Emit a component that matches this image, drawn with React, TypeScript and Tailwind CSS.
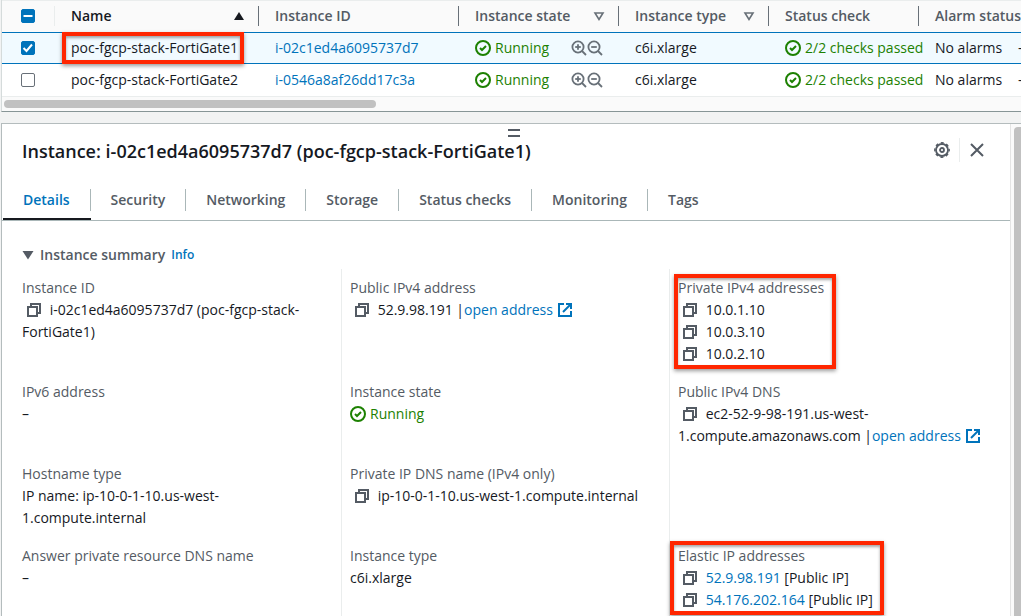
import { useEffect, useRef, useState } from "react";
import type { ReactNode } from "react";

const instances = [
  { name: "poc-fgcp-stack-FortiGate1", id: "i-02c1ed4a6095737d7", flagged: true },
  { name: "poc-fgcp-stack-FortiGate2", id: "i-0546a8af26dd17c3a", flagged: false },
];

const tabs = ["Details", "Security", "Networking", "Storage", "Status checks", "Monitoring", "Tags"];

function CopyIcon() {
  return (
    <svg viewBox="0 0 16 16" className="h-4 w-4" fill="none" stroke="#545b64" strokeWidth="2">
      <path d="M2 5h9v9H2z" />
      <path d="M5 5V2h9v9h-3" />
    </svg>
  );
}

function CopyButton({ label }: { label: string }) {
  return (
    <button type="button" aria-label={label} className="mr-1 ml-1 inline-flex h-4 w-4 align-[-3px]">
      <CopyIcon />
    </button>
  );
}

function ExternalIcon() {
  return (
    <svg viewBox="0 0 16 16" className="ml-1 inline h-4 w-4 align-[-3px]" fill="none" stroke="#0073bb" strokeWidth="2">
      <path d="M7 2H2v12h12V9" />
      <path d="M9 2h5v5" />
      <path d="M6 10l8-8" />
    </svg>
  );
}

function StatusOk({ children }: { children: ReactNode }) {
  return (
    <span className="inline-flex items-center gap-1 whitespace-nowrap text-[#1d8102]">
      <svg viewBox="0 0 16 16" className="h-4 w-4 shrink-0" fill="none" stroke="currentColor" strokeWidth="2">
        <circle cx="8" cy="8" r="7" />
        <path d="M5 8l2 2 4-4" />
      </svg>
      {children}
    </span>
  );
}

function Magnifier({ plus, label }: { plus?: boolean; label: string }) {
  return (
    <button type="button" aria-label={label} className="h-4 w-4">
      <svg viewBox="0 0 16 16" className="h-4 w-4" fill="none" stroke="#687078" strokeWidth="1.8">
        <circle cx="7" cy="7" r="5.6" />
        <path d="M11 11l4 4" />
        <path d="M4.2 7h5.6" />
        {plus && <path d="M7 4.2v5.6" />}
      </svg>
    </button>
  );
}

function Tick({ checked, mixed, label, onChange }: { checked: boolean; mixed?: boolean; label: string; onChange: () => void }) {
  const ref = useRef<HTMLInputElement>(null);
  useEffect(() => {
    if (ref.current) ref.current.indeterminate = !!mixed;
  }, [mixed]);
  const filled = checked || mixed;
  return (
    <span className="relative block h-3.5 w-3.5">
      <input
        ref={ref}
        type="checkbox"
        aria-label={label}
        checked={checked}
        onChange={onChange}
        className={`block h-3.5 w-3.5 appearance-none rounded-xs border ${filled ? "border-[#0073bb] bg-[#0073bb]" : "border-[#687078] bg-white"}`}
      />
      {filled && (
        <svg viewBox="0 0 14 14" className="pointer-events-none absolute inset-0 h-3.5 w-3.5" fill="none" stroke="#fff" strokeWidth="2">
          {mixed ? <path d="M2.5 7h9" /> : <path d="M2.5 7l3 3 5.5-6.5" />}
        </svg>
      )}
    </span>
  );
}

function Highlight({ className }: { className: string }) {
  return (
    <span
      aria-hidden="true"
      className={`pointer-events-none absolute border-[#ff2600] shadow-[0_2px_4px_rgba(0,0,0,0.4),inset_0_2px_3px_rgba(0,0,0,0.35)] ${className}`}
    />
  );
}

function HeaderCell({ children, icon, dark }: { children: ReactNode; icon?: ReactNode; dark?: boolean }) {
  return (
    <th scope="col" className="p-0 text-left font-semibold">
      <div className={`flex h-5 items-center justify-between border-r border-[#687078] pr-3 pl-4 whitespace-nowrap ${dark ? "text-[#16191f]" : "text-[#545b64]"}`}>
        {children}
        {icon}
      </div>
    </th>
  );
}

function FilterMark() {
  return (
    <svg viewBox="0 0 12 12" className="mr-px h-3 w-3" fill="none" stroke="#687078" strokeWidth="1.6">
      <path d="M2 3h8L6 9.5z" />
    </svg>
  );
}

function Field({ label, children, className = "", mark }: { label: string; children: ReactNode; className?: string; mark?: ReactNode }) {
  return (
    <div className={`border-l pb-4 pl-2 ${className}`}>
      <div className="relative">
        <dt className="text-[#545b64]">{label}</dt>
        <dd>{children}</dd>
        {mark}
      </div>
    </div>
  );
}

const first = "border-transparent";
const rest = "border-[#eaeded]";

export default function App() {
  const [selected, setSelected] = useState<string[]>([instances[0].id]);
  const [tab, setTab] = useState("Details");
  const toggle = (id: string) => setSelected((s) => (s.includes(id) ? s.filter((x) => x !== id) : [...s, id]));
  const all = selected.length === instances.length;

  return (
    <div className="flex h-screen flex-col overflow-hidden bg-[#f2f3f3] pl-px font-['Open_Sans','Noto_Sans',sans-serif] text-[14px] leading-[22px] text-[#16191f]">
      <section className="shrink-0 overflow-hidden border-b border-l border-b-[#879596] border-l-[#d5dbdb] bg-white">
        <table className="w-[1176px] table-fixed border-separate border-spacing-0">
          <colgroup>
            <col className="w-[53px]" />
            <col className="w-[204px]" />
            <col className="w-[200px]" />
            <col className="w-[160px]" />
            <col className="w-[150px]" />
            <col className="w-[150px]" />
            <col className="w-[83px]" />
            <col className="w-[176px]" />
          </colgroup>
          <thead>
            <tr className="h-8 bg-[#fafafa] shadow-[inset_0_1px_0_#eaeded]">
              <th scope="col" className="p-0">
                <div className="flex h-5 items-center border-r border-[#eaeded] pl-[19px]">
                  <Tick
                    label="Select all instances"
                    checked={all}
                    mixed={selected.length > 0 && !all}
                    onChange={() => setSelected(all ? [] : instances.map((i) => i.id))}
                  />
                </div>
              </th>
              <HeaderCell
                dark
                icon={
                  <svg viewBox="0 0 12 12" className="mr-px h-3 w-3" fill="#16191f">
                    <path d="M6 2l5 8H1z" />
                  </svg>
                }
              >
                Name
              </HeaderCell>
              <HeaderCell>Instance ID</HeaderCell>
              <HeaderCell icon={<FilterMark />}>Instance state</HeaderCell>
              <HeaderCell icon={<FilterMark />}>Instance type</HeaderCell>
              <HeaderCell>Status check</HeaderCell>
              <th scope="col" className="p-0 pl-4 text-left font-semibold whitespace-nowrap text-[#545b64]">
                Alarm status
              </th>
              <th aria-label="Availability" />
            </tr>
          </thead>
          <tbody>
            {instances.map((row) => {
              const on = selected.includes(row.id);
              return (
                <tr key={row.id} className={`h-8 [&>td]:border-y ${on ? "bg-[#f1faff] [&>td]:border-[#0073bb]" : "[&>td]:border-transparent"}`}>
                  <td className="p-0 pl-[19px]">
                    <Tick label={`Select ${row.name}`} checked={on} onChange={() => toggle(row.id)} />
                  </td>
                  <td className="p-0 pl-4 whitespace-nowrap">
                    <span className="relative block w-[166px]">
                      {row.name}
                      {row.flagged && <Highlight className="-inset-y-[5px] -right-[7px] -left-[9px] border-4" />}
                    </span>
                  </td>
                  <td className="p-0 pl-4 whitespace-nowrap">
                    <a href={`#${row.id}`} className="text-[#0073bb]">
                      {row.id}
                    </a>
                  </td>
                  <td className="p-0 pl-4">
                    <div className="flex items-center justify-between pr-4">
                      <StatusOk>Running</StatusOk>
                      <span className="flex">
                        <Magnifier plus label="Include state in filter" />
                        <Magnifier label="Exclude state from filter" />
                      </span>
                    </div>
                  </td>
                  <td className="p-0 pl-4">c6i.xlarge</td>
                  <td className="p-0 pl-4">
                    <div className="flex">
                      <StatusOk>2/2 checks passed</StatusOk>
                    </div>
                  </td>
                  <td className="p-0 pl-4 whitespace-nowrap">No alarms</td>
                  <td className="p-0 pl-4">–</td>
                </tr>
              );
            })}
          </tbody>
        </table>
        <div className="flex h-[15px] items-center border-t border-[#eaeded] bg-[#fafafa] pl-0.5">
          <div className="h-2 w-[372px] rounded-full bg-[#c1c1c1]" />
        </div>
      </section>

      <section className="mt-[11px] flex min-h-0 flex-1 border-t border-l border-[#b4bcbd] bg-white">
        <div className="min-w-0 flex-1">
          <div className="flex h-[18px] flex-col items-center justify-center gap-1 pl-4">
            <span className="h-0.5 w-3 bg-[#545b64]" />
            <span className="h-0.5 w-3 bg-[#545b64]" />
          </div>
          <header className="-mt-[5px] flex items-start justify-between pr-[25px] pl-5">
            <h2 className="text-[18px] leading-[28px] font-semibold">Instance: i-02c1ed4a6095737d7 (poc-fgcp-stack-FortiGate1)</h2>
            <div className="flex h-[26px] items-center">
              <button type="button" aria-label="Preferences" className="pr-[9px]">
                <svg viewBox="0 0 16 16" className="h-4 w-4" fill="none" stroke="#545b64">
                  <circle cx="8" cy="8" r="6" strokeWidth="1.8" />
                  <circle cx="8" cy="8" r="7.2" strokeWidth="1.4" strokeDasharray="3 2.655" strokeDashoffset="1.5" />
                  <circle cx="8" cy="8" r="2" strokeWidth="1.8" />
                </svg>
              </button>
              <span className="h-6 w-px bg-[#eaeded]" />
              <button type="button" aria-label="Close panel" className="pl-[9px]">
                <svg viewBox="0 0 16 16" className="h-4 w-4" fill="none" stroke="#545b64" strokeWidth="2">
                  <path d="M2 2l12 12M14 2L2 14" />
                </svg>
              </button>
            </div>
          </header>

          <div role="tablist" className="mt-4 flex border-b border-[#aab7b8] pl-px font-semibold">
            {tabs.map((t, i) => (
              <button
                key={t}
                type="button"
                role="tab"
                aria-selected={t === tab}
                onClick={() => setTab(t)}
                className={`border-b-2 pt-2 pb-[7px] ${t === tab ? "border-[#16191f] text-[#0073bb]" : "border-transparent text-[#545b64]"}`}
              >
                <span className={`block px-5 ${i < tabs.length - 1 ? "border-r border-[#aab7b8]" : ""}`}>{t}</span>
              </button>
            ))}
          </div>

          <div className="flex items-center pt-[23px] pl-5 font-semibold text-[#545b64]">
            <button type="button" aria-expanded="true" className="flex items-center gap-1.5">
              <svg viewBox="0 0 12 12" className="h-3 w-3" fill="#545b64">
                <path d="M0.500 2h11L6 10.500z" />
              </svg>
              Instance summary
            </button>
            <a href="#info" className="ml-1.5 text-[12px] text-[#0073bb]">
              Info
            </a>
          </div>

          <dl className="mt-[3px] grid grid-cols-3 pr-[13px] pl-[11px]">
            <Field label="Instance ID" className={`pt-2 ${first}`}>
              <CopyButton label="Copy instance ID" /> i-02c1ed4a6095737d7 (poc-fgcp-stack-<wbr />FortiGate1)
            </Field>
            <Field label="Public IPv4 address" className={`pt-2 ${rest}`}>
              <CopyButton label="Copy public IPv4 address" /> 52.9.98.191 |
              <a href="#open" className="text-[#0073bb]">
                open address
                <ExternalIcon />
              </a>
            </Field>
            <Field
              label="Private IPv4 addresses"
              className={`pt-2 ${rest}`}
              mark={<Highlight className="-top-[3px] -bottom-1 -left-1 w-[162px] border-4" />}
            >
              {["10.0.1.10", "10.0.3.10", "10.0.2.10"].map((ip) => (
                <div key={ip}>
                  <CopyButton label={`Copy ${ip}`} /> {ip}
                </div>
              ))}
            </Field>

            <Field label="IPv6 address" className={first}>
              –
            </Field>
            <Field label="Instance state" className={rest}>
              <StatusOk>Running</StatusOk>
            </Field>
            <Field label="Public IPv4 DNS" className={rest}>
              <CopyButton label="Copy public IPv4 DNS" /> ec2-52-9-98-191.us-west-
              <br />
              1.compute.amazonaws.com |
              <a href="#open" className="text-[#0073bb]">
                open address
                <ExternalIcon />
              </a>
            </Field>

            <Field label="Hostname type" className={first}>
              IP name: ip-10-0-1-10.us-west-
              <br />
              1.compute.internal
            </Field>
            <Field label="Private IP DNS name (IPv4 only)" className={rest}>
              <CopyButton label="Copy private IP DNS name" /> ip-10-0-1-10.us-west-1.compute.internal
            </Field>
            <div className={`border-l ${rest}`} />

            <Field label="Answer private resource DNS name" className={first}>
              –
            </Field>
            <Field label="Instance type" className={rest}>
              c6i.xlarge
            </Field>
            <Field
              label="Elastic IP addresses"
              className={rest}
              mark={<Highlight className="-top-1 -bottom-1 -left-2 w-[214px] border-4" />}
            >
              {["52.9.98.191", "54.176.202.164"].map((ip) => (
                <div key={ip}>
                  <CopyButton label={`Copy ${ip}`} />{" "}
                  <a href={`#${ip}`} className="text-[#0073bb]">
                    {ip}
                  </a>{" "}
                  [Public IP]
                </div>
              ))}
            </Field>
          </dl>
        </div>
        <div className="w-[11px] shrink-0 border-l border-[#e4e4e4] bg-[#fafafa] pt-[3px] pl-[3px]">
          <div className="h-full rounded-tl-sm bg-[#c1c1c1]" />
        </div>
      </section>
    </div>
  );
}
